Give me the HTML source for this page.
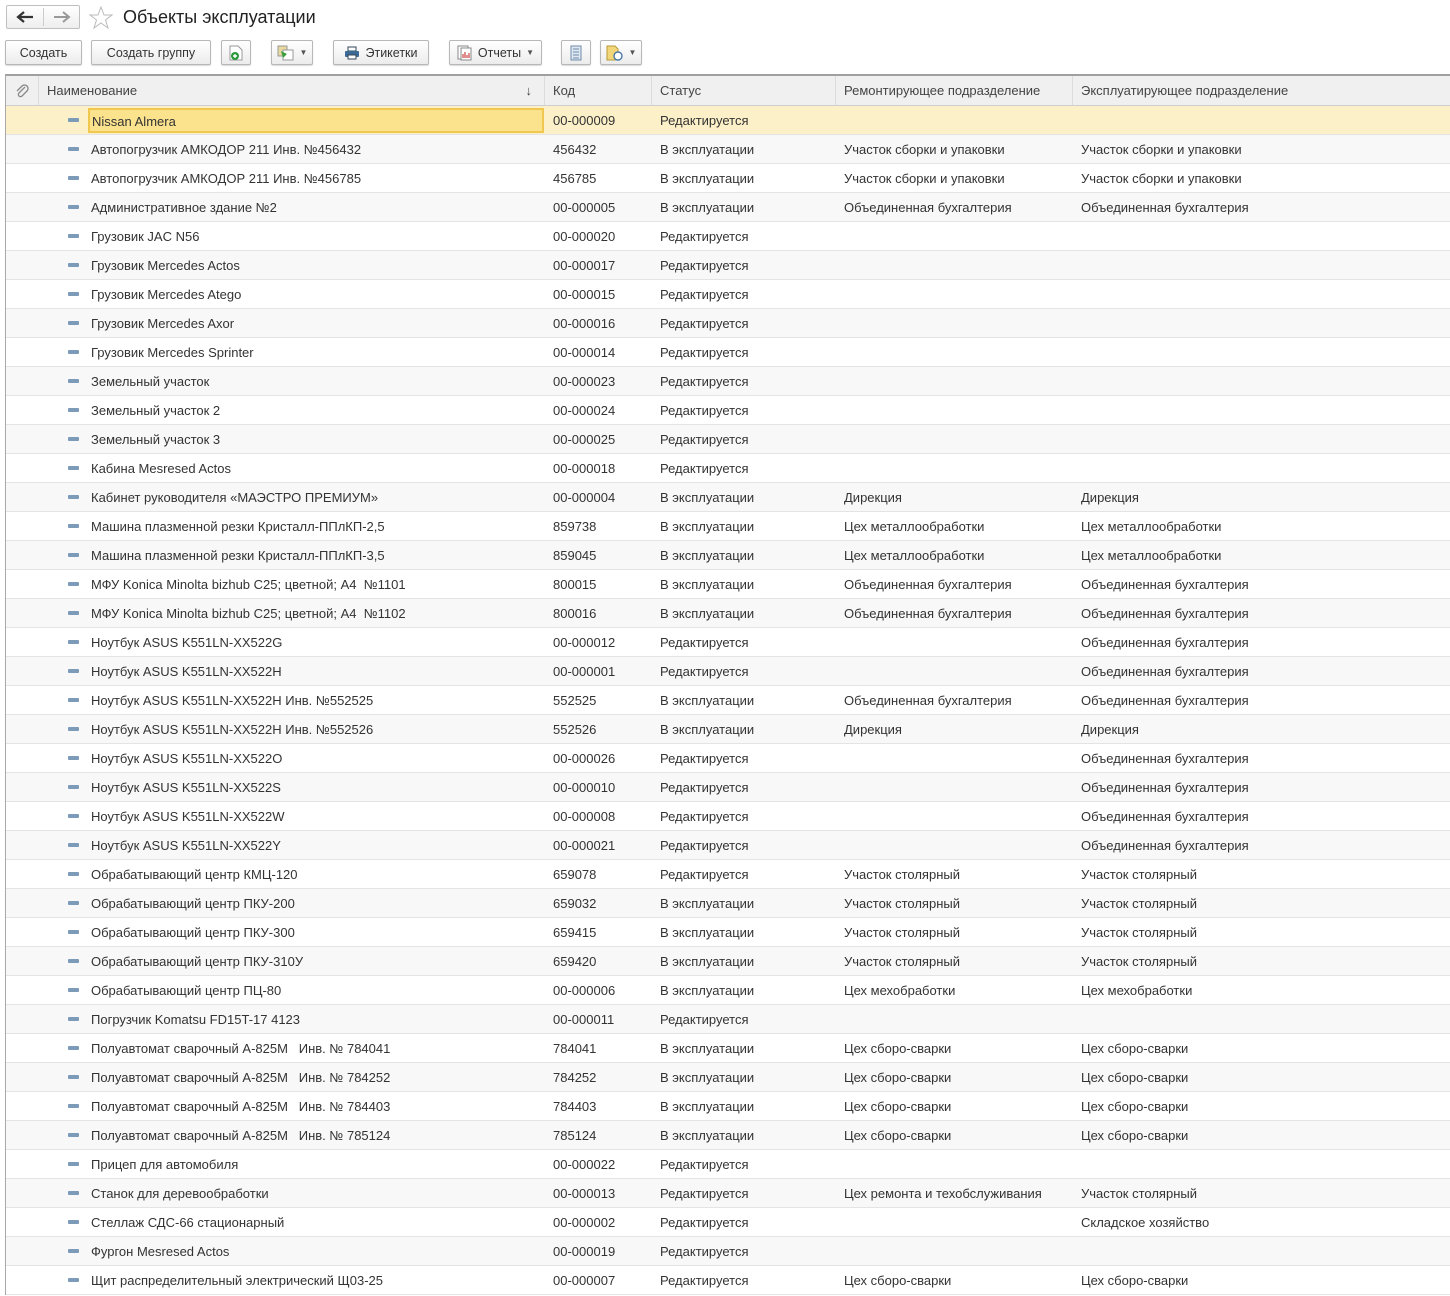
<!DOCTYPE html>
<html><head><meta charset="utf-8"><style>
*{box-sizing:border-box;margin:0;padding:0}
body{width:1450px;height:1296px;overflow:hidden;background:#fff;font-family:"Liberation Sans",Arial,sans-serif;font-size:13px;color:#333;position:relative}
.btn{position:absolute;top:40px;height:25px;border:1px solid #b8b8b8;border-radius:2px;background:linear-gradient(#fff,#ececec);box-shadow:0 1px 1px rgba(0,0,0,.15);font-size:12.5px;color:#333;display:flex;align-items:center;justify-content:center;gap:5px}
.dd{font-size:8px;color:#555}
.grid{position:absolute;left:5px;top:74px;width:1445px;border-left:1px solid #a8a8a8;border-top:2px solid #a0a0a0}
.hdr{height:30px;background:#f0f0f0;border-bottom:1px solid #cfcfcf;position:relative;color:#444}
.hdr div{position:absolute;top:0;height:29px;line-height:29px;padding-left:8px;border-right:1px solid #dcdcdc}
.row{height:29px;border-bottom:1px solid #e4e4e4;position:relative;white-space:pre}
.row:nth-child(even){background:#f8f8f8}
.row span{position:absolute;top:0;line-height:30px}
.row i{position:absolute;left:62px;top:12px;width:11px;height:4px;background:#7b9bb8;border-radius:1px}
.c1{left:85px}.c2{left:547px}.c3{left:654px}.c4{left:838px}.c5{left:1075px}
.sel{background:#fcf0c8 !important}
.sel .c1{left:82px;top:2px;width:456px;height:25px;line-height:23px;background:#fbe38e;border:2px solid #f0c850;padding-left:2px}
</style></head><body>
<div style="position:absolute;left:6px;top:5px;width:74px;height:24px;border:1px solid #c0c0c0;border-radius:2px;background:linear-gradient(#fff,#eee)">
<div style="position:absolute;left:36px;top:2px;width:1px;height:18px;background:#ccc"></div>
<svg style="position:absolute;left:9px;top:5px" width="20" height="12"><path d="M2 6H17M8 1L2 6L8 11" stroke="#333" stroke-width="2.2" fill="none"/></svg>
<svg style="position:absolute;left:45px;top:5px" width="20" height="12"><path d="M2 6H17M11 1L17 6L11 11" stroke="#999" stroke-width="2" fill="none"/></svg>
</div>
<svg style="position:absolute;left:89px;top:6px" width="24" height="23"><path d="M12 1L15 9L23 9L16.5 14L19 22L12 17L5 22L7.5 14L1 9L9 9Z" fill="none" stroke="#bbb" stroke-width="1"/></svg>
<div style="position:absolute;left:123px;top:7px;font-size:18px;color:#222">Объекты эксплуатации</div>

<div class="btn" style="left:5px;width:77px">Создать</div>
<div class="btn" style="left:91px;width:120px">Создать группу</div>
<div class="btn" style="left:221px;width:30px"><svg width="14" height="16"><path d="M1 1H9L13 5V15H1Z" fill="#fff" stroke="#999"/><circle cx="6" cy="11" r="4" fill="#2a9a3a"/><path d="M4 11H8M6 9V13" stroke="#fff" stroke-width="1.4"/></svg></div>
<div class="btn" style="left:271px;width:42px"><svg width="18" height="16"><rect x="1" y="1" width="9" height="10" fill="#e8d9a0" stroke="#999"/><rect x="6" y="5" width="10" height="10" fill="#fff" stroke="#999"/><path d="M4 6L10 9L6 13" fill="#3aa040"/></svg><span class="dd">▼</span></div>
<div class="btn" style="left:333px;width:96px"><svg width="16" height="14"><rect x="4" y="1" width="8" height="4" fill="#fff" stroke="#345"/><rect x="1" y="5" width="14" height="6" rx="1" fill="#3c6a96"/><rect x="4" y="9" width="8" height="4" fill="#fff" stroke="#345"/></svg>Этикетки</div>
<div class="btn" style="left:449px;width:93px"><svg width="16" height="16"><rect x="1" y="1" width="10" height="13" fill="#fff" stroke="#888"/><rect x="4" y="3" width="10" height="12" fill="#fff" stroke="#888"/><path d="M6 13V9M8 13V7M10 13V10M12 13V8" stroke="#c44" stroke-width="1.2"/></svg>Отчеты <span class="dd">▼</span></div>
<div class="btn" style="left:561px;width:30px"><svg width="12" height="16"><rect x="1" y="1" width="10" height="14" fill="#dfe7f0" stroke="#6d8bab"/><path d="M3 4H9M3 7H9M3 10H9M3 13H9" stroke="#6d8bab"/></svg></div>
<div class="btn" style="left:600px;width:42px"><svg width="18" height="16"><path d="M1 1H9L12 4V15H1Z" fill="#f2d77a" stroke="#b99a3a"/><circle cx="12" cy="11" r="4" fill="#fff" stroke="#4a78a8" stroke-width="1.4"/></svg><span class="dd">▼</span></div>

<div class="grid">
<div class="hdr">
<div style="left:0;width:33px;padding:0;text-align:center"><svg width="14" height="16" style="margin-top:7px"><path d="M10 4L4 10A2 2 0 0 0 7 13L12 8A3.5 3.5 0 0 0 7 3L2 8" fill="none" stroke="#888" stroke-width="1.3"/></svg></div>
<div style="left:33px;width:506px">Наименование<span style="position:absolute;right:12px">↓</span></div>
<div style="left:539px;width:107px">Код</div>
<div style="left:646px;width:184px">Статус</div>
<div style="left:830px;width:237px">Ремонтирующее подразделение</div>
<div style="left:1067px;width:378px;border-right:0">Эксплуатирующее подразделение</div>
</div>
<div>
<div class="row sel"><i></i><span class="c1">Nissan Almera</span><span class="c2">00-000009</span><span class="c3">Редактируется</span></div>
<div class="row"><i></i><span class="c1">Автопогрузчик АМКОДОР 211 Инв. №456432</span><span class="c2">456432</span><span class="c3">В эксплуатации</span><span class="c4">Участок сборки и упаковки</span><span class="c5">Участок сборки и упаковки</span></div>
<div class="row"><i></i><span class="c1">Автопогрузчик АМКОДОР 211 Инв. №456785</span><span class="c2">456785</span><span class="c3">В эксплуатации</span><span class="c4">Участок сборки и упаковки</span><span class="c5">Участок сборки и упаковки</span></div>
<div class="row"><i></i><span class="c1">Административное здание №2</span><span class="c2">00-000005</span><span class="c3">В эксплуатации</span><span class="c4">Объединенная бухгалтерия</span><span class="c5">Объединенная бухгалтерия</span></div>
<div class="row"><i></i><span class="c1">Грузовик JAC N56</span><span class="c2">00-000020</span><span class="c3">Редактируется</span></div>
<div class="row"><i></i><span class="c1">Грузовик Mercedes Actos</span><span class="c2">00-000017</span><span class="c3">Редактируется</span></div>
<div class="row"><i></i><span class="c1">Грузовик Mercedes Atego</span><span class="c2">00-000015</span><span class="c3">Редактируется</span></div>
<div class="row"><i></i><span class="c1">Грузовик Mercedes Axor</span><span class="c2">00-000016</span><span class="c3">Редактируется</span></div>
<div class="row"><i></i><span class="c1">Грузовик Mercedes Sprinter</span><span class="c2">00-000014</span><span class="c3">Редактируется</span></div>
<div class="row"><i></i><span class="c1">Земельный участок</span><span class="c2">00-000023</span><span class="c3">Редактируется</span></div>
<div class="row"><i></i><span class="c1">Земельный участок 2</span><span class="c2">00-000024</span><span class="c3">Редактируется</span></div>
<div class="row"><i></i><span class="c1">Земельный участок 3</span><span class="c2">00-000025</span><span class="c3">Редактируется</span></div>
<div class="row"><i></i><span class="c1">Кабина Mesresed Actos</span><span class="c2">00-000018</span><span class="c3">Редактируется</span></div>
<div class="row"><i></i><span class="c1">Кабинет руководителя «МАЭСТРО ПРЕМИУМ»</span><span class="c2">00-000004</span><span class="c3">В эксплуатации</span><span class="c4">Дирекция</span><span class="c5">Дирекция</span></div>
<div class="row"><i></i><span class="c1">Машина плазменной резки Кристалл-ППлКП-2,5</span><span class="c2">859738</span><span class="c3">В эксплуатации</span><span class="c4">Цех металлообработки</span><span class="c5">Цех металлообработки</span></div>
<div class="row"><i></i><span class="c1">Машина плазменной резки Кристалл-ППлКП-3,5</span><span class="c2">859045</span><span class="c3">В эксплуатации</span><span class="c4">Цех металлообработки</span><span class="c5">Цех металлообработки</span></div>
<div class="row"><i></i><span class="c1">МФУ Konica Minolta bizhub C25; цветной; A4  №1101</span><span class="c2">800015</span><span class="c3">В эксплуатации</span><span class="c4">Объединенная бухгалтерия</span><span class="c5">Объединенная бухгалтерия</span></div>
<div class="row"><i></i><span class="c1">МФУ Konica Minolta bizhub C25; цветной; A4  №1102</span><span class="c2">800016</span><span class="c3">В эксплуатации</span><span class="c4">Объединенная бухгалтерия</span><span class="c5">Объединенная бухгалтерия</span></div>
<div class="row"><i></i><span class="c1">Ноутбук ASUS K551LN-XX522G</span><span class="c2">00-000012</span><span class="c3">Редактируется</span><span class="c5">Объединенная бухгалтерия</span></div>
<div class="row"><i></i><span class="c1">Ноутбук ASUS K551LN-XX522H</span><span class="c2">00-000001</span><span class="c3">Редактируется</span><span class="c5">Объединенная бухгалтерия</span></div>
<div class="row"><i></i><span class="c1">Ноутбук ASUS K551LN-XX522H Инв. №552525</span><span class="c2">552525</span><span class="c3">В эксплуатации</span><span class="c4">Объединенная бухгалтерия</span><span class="c5">Объединенная бухгалтерия</span></div>
<div class="row"><i></i><span class="c1">Ноутбук ASUS K551LN-XX522H Инв. №552526</span><span class="c2">552526</span><span class="c3">В эксплуатации</span><span class="c4">Дирекция</span><span class="c5">Дирекция</span></div>
<div class="row"><i></i><span class="c1">Ноутбук ASUS K551LN-XX522O</span><span class="c2">00-000026</span><span class="c3">Редактируется</span><span class="c5">Объединенная бухгалтерия</span></div>
<div class="row"><i></i><span class="c1">Ноутбук ASUS K551LN-XX522S</span><span class="c2">00-000010</span><span class="c3">Редактируется</span><span class="c5">Объединенная бухгалтерия</span></div>
<div class="row"><i></i><span class="c1">Ноутбук ASUS K551LN-XX522W</span><span class="c2">00-000008</span><span class="c3">Редактируется</span><span class="c5">Объединенная бухгалтерия</span></div>
<div class="row"><i></i><span class="c1">Ноутбук ASUS K551LN-XX522Y</span><span class="c2">00-000021</span><span class="c3">Редактируется</span><span class="c5">Объединенная бухгалтерия</span></div>
<div class="row"><i></i><span class="c1">Обрабатывающий центр КМЦ-120</span><span class="c2">659078</span><span class="c3">Редактируется</span><span class="c4">Участок столярный</span><span class="c5">Участок столярный</span></div>
<div class="row"><i></i><span class="c1">Обрабатывающий центр ПКУ-200</span><span class="c2">659032</span><span class="c3">В эксплуатации</span><span class="c4">Участок столярный</span><span class="c5">Участок столярный</span></div>
<div class="row"><i></i><span class="c1">Обрабатывающий центр ПКУ-300</span><span class="c2">659415</span><span class="c3">В эксплуатации</span><span class="c4">Участок столярный</span><span class="c5">Участок столярный</span></div>
<div class="row"><i></i><span class="c1">Обрабатывающий центр ПКУ-310У</span><span class="c2">659420</span><span class="c3">В эксплуатации</span><span class="c4">Участок столярный</span><span class="c5">Участок столярный</span></div>
<div class="row"><i></i><span class="c1">Обрабатывающий центр ПЦ-80</span><span class="c2">00-000006</span><span class="c3">В эксплуатации</span><span class="c4">Цех мехобработки</span><span class="c5">Цех мехобработки</span></div>
<div class="row"><i></i><span class="c1">Погрузчик Komatsu FD15T-17 4123</span><span class="c2">00-000011</span><span class="c3">Редактируется</span></div>
<div class="row"><i></i><span class="c1">Полуавтомат сварочный А-825М   Инв. № 784041</span><span class="c2">784041</span><span class="c3">В эксплуатации</span><span class="c4">Цех сборо-сварки</span><span class="c5">Цех сборо-сварки</span></div>
<div class="row"><i></i><span class="c1">Полуавтомат сварочный А-825М   Инв. № 784252</span><span class="c2">784252</span><span class="c3">В эксплуатации</span><span class="c4">Цех сборо-сварки</span><span class="c5">Цех сборо-сварки</span></div>
<div class="row"><i></i><span class="c1">Полуавтомат сварочный А-825М   Инв. № 784403</span><span class="c2">784403</span><span class="c3">В эксплуатации</span><span class="c4">Цех сборо-сварки</span><span class="c5">Цех сборо-сварки</span></div>
<div class="row"><i></i><span class="c1">Полуавтомат сварочный А-825М   Инв. № 785124</span><span class="c2">785124</span><span class="c3">В эксплуатации</span><span class="c4">Цех сборо-сварки</span><span class="c5">Цех сборо-сварки</span></div>
<div class="row"><i></i><span class="c1">Прицеп для автомобиля</span><span class="c2">00-000022</span><span class="c3">Редактируется</span></div>
<div class="row"><i></i><span class="c1">Станок для деревообработки</span><span class="c2">00-000013</span><span class="c3">Редактируется</span><span class="c4">Цех ремонта и техобслуживания</span><span class="c5">Участок столярный</span></div>
<div class="row"><i></i><span class="c1">Стеллаж СДС-66 стационарный</span><span class="c2">00-000002</span><span class="c3">Редактируется</span><span class="c5">Складское хозяйство</span></div>
<div class="row"><i></i><span class="c1">Фургон Mesresed Actos</span><span class="c2">00-000019</span><span class="c3">Редактируется</span></div>
<div class="row"><i></i><span class="c1">Щит распределительный электрический Щ03-25</span><span class="c2">00-000007</span><span class="c3">Редактируется</span><span class="c4">Цех сборо-сварки</span><span class="c5">Цех сборо-сварки</span></div>
</div>
</div>
</body></html>
